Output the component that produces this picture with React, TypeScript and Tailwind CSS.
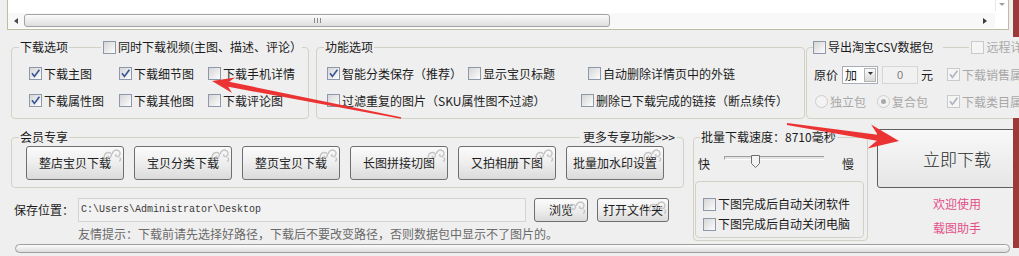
import React from "react";

const FONT = "font-['Noto_Sans_CJK_SC',sans-serif]";

function Box({ checked = false, disabled = false }: { checked?: boolean; disabled?: boolean }) {
  return (
    <span
      className={
        "relative inline-block w-[13px] h-[13px] shrink-0 border " +
        (disabled
          ? "border-[#cacaca] bg-[#f5f5f5]"
          : "border-[#8d99ab] bg-linear-to-br from-[#d6d6d6] to-[#fdfdfd]")
      }
    >
      {checked ? (
        <svg className="absolute left-0 top-0" width="11" height="11" viewBox="0 0 11 11">
          <path
            d="M2 5.2 L4.4 8.4 L9.4 1.8"
            fill="none"
            stroke={disabled ? "#aeb4be" : "#3a5597"}
            strokeWidth="1.7"
          />
        </svg>
      ) : null}
    </span>
  );
}

function Check({
  label,
  checked,
  disabled,
  className = "",
}: {
  label: string;
  checked?: boolean;
  disabled?: boolean;
  className?: string;
}) {
  return (
    <label
      className={[
        "flex items-center gap-[2px] whitespace-nowrap shrink-0",
        disabled ? "text-[#a8a8a8]" : "text-[#1b1b1b]",
        className,
      ].join(" ")}
    >
      <Box checked={checked} disabled={disabled} />
      <span className="leading-[14px]">{label}</span>
    </label>
  );
}

function Radio({ label, on, className = "" }: { label: string; on?: boolean; className?: string }) {
  return (
    <label className={"flex items-center gap-[2px] whitespace-nowrap text-[#a8a8a8] " + className}>
      <span className="flex items-center justify-center w-[13px] h-[13px] rounded-full border border-[#cdcdcd] bg-[#f3f3f3]">
        {on ? <span className="w-[5px] h-[5px] rounded-full bg-[#a9a9a9]" /> : null}
      </span>
      <span>{label}</span>
    </label>
  );
}

// little curl ornament in the corner of the skinned buttons
function Swirl() {
  return (
    <svg
      className="absolute top-[1px] right-[1px] pointer-events-none"
      width="20"
      height="14"
      viewBox="0 0 20 14"
      fill="none"
      stroke="#c4c4c4"
      strokeWidth="1.4"
    >
      <path d="M3 12.5 C1 9 2.5 4.5 6.5 4.5 C9.5 4.5 10.5 7.5 8.5 9 C7 10 5.5 8.8 6.6 7.6" />
      <path d="M10.5 6 C10.5 2.2 14.5 1 17 3 C19 5 18 8.5 15.2 8.6 C13.4 8.7 13 6.8 14.4 6.3" />
      <path d="M17.5 9.5 C19.2 10.5 18.8 13 17 13.3" />
    </svg>
  );
}

function Btn({ label, className = "" }: { label: string; className?: string }) {
  return (
    <button
      type="button"
      className={
        "relative flex shrink-0 items-center justify-center whitespace-nowrap rounded-[3px] border border-[#6f6f6f] bg-linear-to-b from-[#fbfbfb] via-[#eeeeee] to-[#dbdbdb] text-[#1e1e1e] " +
        className
      }
    >
      {label}
      <Swirl />
    </button>
  );
}

const memberBtns = ["整店宝贝下载", "宝贝分类下载", "整页宝贝下载", "长图拼接切图", "又拍相册下图", "批量加水印设置"];

export default function App() {
  return (
    <div
      className={
        "relative w-[1019px] h-[256px] overflow-hidden bg-[#efefef] text-[12px] leading-[14px] text-[#1b1b1b] " +
        FONT
      }
    >
      {/* list box, only its bottom edge with the scrollbar is visible */}
      <div className="ml-[7px] w-[1002px] h-[30px] flex border-x border-b border-[#bdbd9f] bg-white">
        <div className="flex-1 flex flex-col justify-end pb-[1px]">
          <div className="h-[15px] flex items-center bg-[#f8f8f8]">
            <span className="w-[16px] flex justify-center">
              <svg width="4" height="6" viewBox="0 0 4 6">
                <path d="M4 0 L0 3 L4 6 Z" fill="#4a4a4a" />
              </svg>
            </span>
            <div className="w-[586px] h-[13px] rounded-[3px] border border-[#a3a3a3] bg-linear-to-b from-[#fbfbfb] to-[#dedede] flex items-center justify-center gap-[2px]">
              <span className="w-px h-[5px] bg-[#8a8a8a]" />
              <span className="w-px h-[5px] bg-[#8a8a8a]" />
              <span className="w-px h-[5px] bg-[#8a8a8a]" />
            </div>
            <div className="flex-1" />
            <span className="w-[12px] mr-[4px] flex justify-center">
              <svg width="4" height="6" viewBox="0 0 4 6">
                <path d="M0 0 L4 3 L0 6 Z" fill="#3a3a3a" />
              </svg>
            </span>
          </div>
        </div>
        <div className="w-[13px] flex flex-col">
          <div className="h-[11px] border-l border-[#e8e8e8] flex justify-center pt-[3px]">
            <svg width="6" height="3" viewBox="0 0 6 3">
              <path d="M0 0 L6 0 L3 3 Z" fill="#a0a0a0" />
            </svg>
          </div>
        </div>
      </div>

      {/* option groups */}
      <div className="mt-[10px] flex items-start">
        <fieldset className="ml-[11px] w-[298px] shrink-0 border border-[#d2d2c4] rounded-[4px] pt-[6px] pb-[4px]">
          <legend className="ml-[7px] whitespace-nowrap">
            <div className="flex items-center h-[14px]">
              <span className="shrink-0 px-[1px]">下载选项</span>
              <span className="shrink-0 self-start mt-[7px] w-[32px] h-px bg-[#d2d2c4]" />
              <Check className="ml-[2px]" label="同时下载视频(主图、描述、评论）" />
            </div>
          </legend>
          <div className="pl-[17px] flex h-[27px] items-center">
            <Check className="w-[90px]" checked label="下载主图" />
            <Check className="w-[89px]" checked label="下载细节图" />
            <Check label="下载手机详情" />
          </div>
          <div className="pl-[17px] flex h-[27px] items-center">
            <Check className="w-[90px]" checked label="下载属性图" />
            <Check className="w-[89px]" label="下载其他图" />
            <Check label="下载评论图" />
          </div>
        </fieldset>

        <fieldset className="ml-[7px] w-[489px] shrink-0 border border-[#d2d2c4] rounded-[4px] pt-[6px] pb-[4px]">
          <legend className="ml-[7px] px-[1px] h-[14px] whitespace-nowrap">功能选项</legend>
          <div className="pl-[10px] flex h-[27px] items-center">
            <Check className="w-[141px]" checked label="智能分类保存（推荐）" />
            <Check className="w-[120px]" label="显示宝贝标题" />
            <Check label="自动删除详情页中的外链" />
          </div>
          <div className="pl-[10px] flex h-[27px] items-center">
            <Check className="w-[254px]" label="过滤重复的图片（SKU属性图不过滤）" />
            <Check label="删除已下载完成的链接（断点续传）" />
          </div>
        </fieldset>

        <fieldset className="ml-[1px] w-[240px] shrink-0 border border-[#d2d2c4] rounded-[4px] pt-[7px] pb-[3px]">
          <legend className="ml-[6px] whitespace-nowrap">
            <div className="flex items-center h-[14px]">
              <Check className="pr-[10px]" label="导出淘宝CSV数据包" />
              <span className="shrink-0 self-start mt-[7px] w-[26px] h-px bg-[#d2d2c4]" />
              <Check className="ml-[2px]" disabled label="远程详情" />
            </div>
          </legend>
          <div className="pl-[7px] flex h-[27px] items-center whitespace-nowrap">
            <span>原价</span>
            <div className="ml-[4px] w-[36px] h-[18px] flex items-center border border-[#a9afb8] bg-white">
              <span className="flex-1 pl-[2px]">加</span>
              <span className="mr-[1px] w-[12px] h-[14px] flex justify-center pt-[3px] border border-[#b4b4b4] bg-linear-to-b from-[#fafafa] to-[#d9d9d9]">
                <svg width="5" height="3" viewBox="0 0 5 3">
                  <path d="M0 0 L5 0 L2.5 3 Z" fill="#333" />
                </svg>
              </span>
            </div>
            <div className="ml-[4px] w-[36px] h-[18px] flex items-center justify-center border border-[#d6d6d6] bg-[#f1f1f1] text-[#7c7c7c] text-[11px] font-['Liberation_Sans',sans-serif]">
              0
            </div>
            <span className="ml-[3px]">元</span>
            <Check className="ml-[14px]" disabled checked label="下载销售属性" />
          </div>
          <div className="pl-[8px] flex h-[27px] items-center">
            <Radio label="独立包" />
            <Radio className="ml-[11px]" on label="复合包" />
            <Check className="ml-[19px]" disabled checked label="下载类目属性" />
          </div>
        </fieldset>
      </div>

      {/* lower part */}
      <div className="mt-[10px] flex items-start">
        <div className="ml-[11px] w-[673px] shrink-0 mt-[1px]">
          <fieldset className="w-full border border-[#d2d2c4] rounded-[4px] pb-[7px]">
            <legend className="ml-[7px] whitespace-nowrap">
              <div className="w-[658px] flex items-center h-[14px]">
                <span className="shrink-0 px-[1px]">会员专享</span>
                <span className="self-start mt-[7px] flex-1 h-px bg-[#d2d2c4]" />
                <span className="shrink-0 pl-[3px] pr-[2px] text-[#222]">更多专享功能&gt;&gt;&gt;</span>
              </div>
            </legend>
            <div className="mt-[2px] pl-[14px] flex gap-[10px]">
              {memberBtns.map((b) => (
                <Btn key={b} label={b} className="w-[98px] h-[34px]" />
              ))}
            </div>
          </fieldset>

          <div className="mt-[10px] pl-[3px] flex items-center h-[24px] whitespace-nowrap">
            <span className="w-[60px] shrink-0">保存位置：</span>
            <div className="ml-[4px] w-[448px] h-[24px] shrink-0 flex items-center pl-[2px] border border-[#d3d3d3] bg-[#f2f2f2] text-[10px] text-[#3a3a3a] font-['Liberation_Mono',monospace]">
              C:\Users\Administrator\Desktop
            </div>
            <Btn label="浏览" className="ml-[8px] w-[54px] h-[24px]" />
            <Btn label="打开文件夹" className="ml-[9px] w-[72px] h-[24px]" />
          </div>

          <div className="mt-[5px] pl-[67px] h-[14px] text-[#6a6a6a] whitespace-nowrap">
            友情提示：下载前请先选择好路径，下载后不要改变路径，否则数据包中显示不了图片的。
          </div>
        </div>

        <fieldset className="ml-[9px] mt-[1px] w-[175px] shrink-0 border border-[#d2d2c4] rounded-[4px] pb-[2px]">
          <legend className="ml-[6px] px-[1px] h-[14px] whitespace-nowrap">批量下载速度：8710毫秒</legend>
          <div className="mt-[10px] h-[20px] flex items-start">
            <span className="ml-[4px] mt-[3px]">快</span>
            <div className="relative ml-[14px] mt-[1px] w-[100px] h-[14px]">
              <div className="absolute left-0 top-[1px] w-full h-[4px] border-t border-l border-[#9e9e9e] border-b-white border-b bg-[#e4e4e4]" />
              <svg className="absolute left-[27px] top-0" width="9" height="13" viewBox="0 0 9 13">
                <path d="M0.5 0.5 H8.5 V8.5 L4.5 12.5 L0.5 8.5 Z" fill="#f3f3f3" stroke="#6e6e6e" />
              </svg>
            </div>
            <span className="ml-[18px] mt-[3px]">慢</span>
          </div>
          <div className="mt-[7px] ml-[1px] w-[169px] h-[57px] border border-[#d2d2c4] rounded-[4px] pt-[12px] pl-[7px]">
            <div className="h-[20px] flex items-center">
              <Check label="下图完成后自动关闭软件" />
            </div>
            <div className="h-[20px] flex items-center">
              <Check label="下图完成后自动关闭电脑" />
            </div>
          </div>
        </fieldset>

        <div className="ml-[9px] w-[160px] shrink-0 flex flex-col items-center">
          <button
            type="button"
            className="w-[160px] h-[59px] rounded-[3px] border border-[#5f5f5f] bg-linear-to-b from-[#f8f8f8] to-[#e6e6e6] text-[17px] font-light text-[#2a2a2a]"
          >
            立即下载
          </button>
          <span className="mt-[9px] text-[#e5508a]">欢迎使用</span>
          <span className="mt-[10px] text-[#e5508a]">载图助手</span>
        </div>
      </div>

      {/* progress bar */}
      <div className="mt-[3px] ml-[15px] w-[995px] h-[9px] rounded-full border border-[#9d9d9d] bg-linear-to-b from-[#fdfdfd] to-[#dcdcdc]" />

      {/* border of the window behind, on the right */}
      <div className="absolute right-0 top-0 w-[6px] h-[37px] bg-[#9a3a3a]" />
      <div className="absolute right-0 top-[118px] w-[6px] h-[130px] bg-[#9a3a3a]" />

      {/* red annotation arrows */}
      <svg className="absolute left-0 top-0 pointer-events-none" width="1019" height="256">
        <polygon
          fill="#ec3333"
          points="212,81 235.1,77.4 229.2,81.8 401.2,117.2 400.8,118.8 228.2,86.8 232.1,93"
        />
        <polygon
          fill="#ec3333"
          points="899,141 871.1,124.6 877.7,134.7 787.2,123 786.9,125 876.8,140.7 867.5,148.4"
        />
      </svg>
    </div>
  );
}
